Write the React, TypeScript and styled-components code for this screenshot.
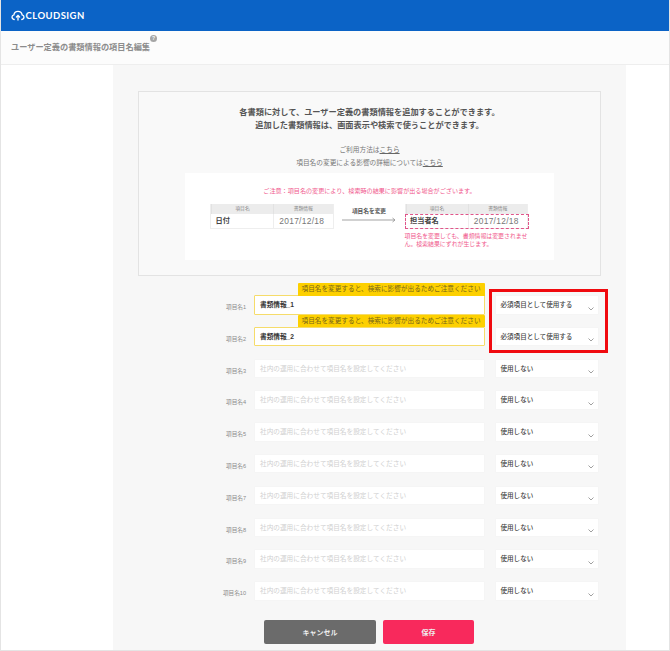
import React from "react";
import styled, { createGlobalStyle } from "styled-components";

const Global = createGlobalStyle`
  html, body { margin: 0; padding: 0; background: #fff; }
  body { font-family: "Liberation Sans", "Noto Sans CJK JP", sans-serif; color: #555; }
  * { box-sizing: border-box; }
`;

const Page = styled.div`
  width: 670px; height: 651px; overflow: hidden; display: flex; flex-direction: column;
  border-left: 1px solid #e4e4e4; border-right: 1px solid #e4e4e4; border-bottom: 1px solid #e4e4e4;
`;
const Header = styled.header`
  height: 31px; background: #0b63c6; display: flex; align-items: center; padding-left: 9.5px; gap: 1px; flex: none;
`;
const Brand = styled.span`
  font-family: "Lato", sans-serif; font-weight: 700; font-size: 9.5px; letter-spacing: .45px; color: #fff;
`;
const TitleBar = styled.div`
  height: 34px; flex: none; background: #fcfcfc; border-bottom: 1px solid #eee; padding: 10px 0 0 10px; display: flex;
`;
const Title = styled.h1`
  margin: 0; font-size: 8.2px; line-height: 13px; font-weight: 700; color: #8c8c8c;
`;
const Help = styled.span`
  width: 7px; height: 7px; border-radius: 50%; background: #a5a5a5; color: #fff; font-size: 5px; line-height: 7px;
  text-align: center; margin: -6px 0 0 0; font-weight: 700;
`;
const Body = styled.div`
  flex: 1; display: flex; padding-left: 112px;
`;
const Main = styled.main`
  width: 513px; background: #f7f7f7; padding: 26px 25px 0; position: relative;
`;
const InfoBox = styled.section`
  width: 463px; height: 185px; border: 1.5px solid #e3e3e3; background: #f9f9f9; padding: 15px 15px 0; text-align: center;
  display: flex; flex-direction: column; align-items: center;
`;
const Lead = styled.p`
  margin: 0; font-size: 8.2px; line-height: 12.5px; font-weight: 700; color: #555;
`;
const Note = styled.p<{ $top: number }>`
  margin: ${p => p.$top}px 0 0; font-size: 6.7px; line-height: 13px; color: #777;
`;
const Link = styled.a`
  color: #666; text-decoration: underline;
`;
const Sample = styled.div`
  margin-top: 4px; width: 369px; height: 87px; background: #fff; padding: 13px 25px 0; display: flex; flex-direction: column; align-self: center;
`;
const Caution = styled.p`
  margin: 0; font-size: 6.1px; line-height: 9px; color: #f0588c; text-align: center; white-space: nowrap;
`;
const Compare = styled.div`
  display: flex; align-items: flex-start; margin-top: 9px; gap: 8.5px;
`;
const Table = styled.div`
  width: 123.5px; flex: none; display: grid; grid-template-columns: 62px 1fr; grid-template-rows: 10px 14px; border: 1px solid #eee; border-top: none; position: relative;
`;
const HeadCell = styled.div`
  background: #ececec; font-size: 4.8px; line-height: 10px; color: #888; text-align: center; border-left: 1px solid #e2e2e2;
`;
const NameCell = styled.div`
  font-size: 7.2px; line-height: 14px; font-weight: 700; color: #444; text-align: left; padding-left: 4.5px;
`;
const ValueCell = styled.div`
  font-size: 8.4px; line-height: 14px; color: #777; text-align: center; border-left: 1px solid #eee; letter-spacing: .3px; padding-right: 3px;
`;
const Dashed = styled.div`
  position: absolute; left: -1px; right: -2px; top: 9.5px; height: 15.5px; border: 1.5px dashed #e0558a;
`;
const Arrow = styled.div`
  width: 54px; flex: none; padding-top: 3px; text-align: center; font-size: 5.7px; line-height: 8px; font-weight: 700; color: #555;
`;
const ArrowLine = styled.svg`
  display: block; margin-top: 1px;
`;
const Right = styled.div`
  display: flex; flex-direction: column; width: 130px; flex: none;
`;
const Warn = styled.p`
  margin: 2.5px 0 0; font-size: 5.9px; line-height: 8.5px; color: #f0588c; text-align: left;
`;
const Rows = styled.div`
  margin-top: 7px; display: flex; flex-direction: column; position: relative;
`;
const Row = styled.div`
  height: 31.8px; display: grid; grid-template-columns: 116px 230.5px 115px; padding-top: 12px;
`;
const RowLabel = styled.label`
  font-size: 5.6px; line-height: 8px; color: #8a8a8a; text-align: right; padding: 8px 8px 0 0; white-space: nowrap;
`;
const Field = styled.div<{ $on?: boolean }>`
  height: 19.5px; position: relative; background: #fff; border-radius: 1px; font-size: 6.67px; line-height: 18px; padding: 0 5px;
  border: ${p => (p.$on ? "1px solid #f6dc6a" : "1px solid #f5f5f5")};
  color: ${p => (p.$on ? "#333" : "#d0d0d0")}; font-weight: ${p => (p.$on ? 700 : 400)};
`;
const Tag = styled.div`
  position: absolute; right: -1px; top: -13px; height: 12.5px; width: 187px; background: #fdd000; border-radius: 1px 1px 0 0;
  color: #77651a; font-size: 6.65px; line-height: 12px; font-weight: 400; padding-left: 4px; white-space: nowrap;
`;
const Select = styled.div`
  margin-left: 10px; height: 19.5px; width: 104px; background: #fff; border: 1px solid #f5f5f5; border-radius: 1px; padding-left: 5px;
  font-size: 6.55px; line-height: 18px; color: #444; position: relative; font-weight: 500;
`;
const Chevron = styled.svg`
  position: absolute; right: 4px; top: 10.5px;
`;
const RedBox = styled.div`
  position: absolute; left: 351px; top: 6px; width: 119px; height: 64px; border: 3px solid #f00a0f; pointer-events: none;
`;
const Buttons = styled.div`
  display: flex; gap: 7px; margin: 19px 0 0 126px;
`;
const Button = styled.button<{ $primary?: boolean }>`
  height: 24px; width: ${p => (p.$primary ? "91px" : "112px")}; border: none; border-radius: 2px; color: #eee;
  background: ${p => (p.$primary ? "#f8295c" : "#6b6b6b")}; font: 700 7px "Liberation Sans", "Noto Sans CJK JP", sans-serif; padding: 0;
`;

const Logo = () => (
  <svg width="14" height="11" viewBox="0 0 14 11" fill="none" stroke="#fff" strokeWidth="1.3" strokeLinecap="round">
    <path d="M3.2 9.5C1.8 9.3 1 8.3 1 7.1c0-1.2.8-2 1.9-2.2C3.2 2.8 4.9 1.3 7 1.3s3.8 1.5 4.1 3.6c1.1.2 1.9 1 1.9 2.2 0 1.2-.8 2.2-2.2 2.4" />
    <path d="M7 10V5.5M5.4 7 7 5.4 8.6 7" />
  </svg>
);

const names = Array.from({ length: 10 }, (_, i) => i + 1);

export default function App() {
  return (
    <Page>
      <Global />
      <Header>
        <Logo />
        <Brand>CLOUDSIGN</Brand>
      </Header>
      <TitleBar>
        <Title>ユーザー定義の書類情報の項目名編集</Title>
        <Help>?</Help>
      </TitleBar>
      <Body>
        <Main>
          <InfoBox>
            <Lead>各書類に対して、ユーザー定義の書類情報を追加することができます。</Lead>
            <Lead>追加した書類情報は、画面表示や検索で使うことができます。</Lead>
            <Note $top={11}>ご利用方法は<Link>こちら</Link></Note>
            <Note $top={0}>項目名の変更による影響の詳細については<Link>こちら</Link></Note>
            <Sample>
              <Caution>ご注意：項目名の変更により、検索時の結果に影響が出る場合がございます。</Caution>
              <Compare>
                <Table>
                  <HeadCell>項目名</HeadCell>
                  <HeadCell>書類情報</HeadCell>
                  <NameCell>日付</NameCell>
                  <ValueCell>2017/12/18</ValueCell>
                </Table>
                <Arrow>
                  項目名を変更
                  <ArrowLine width="54" height="8" viewBox="0 0 54 8">
                    <path d="M0 4H53M50.5 2 53 4 50.5 6" stroke="#999" strokeWidth=".9" fill="none" />
                  </ArrowLine>
                </Arrow>
                <Right>
                  <Table>
                    <HeadCell>項目名</HeadCell>
                    <HeadCell>書類情報</HeadCell>
                    <NameCell>担当者名</NameCell>
                    <ValueCell>2017/12/18</ValueCell>
                    <Dashed />
                  </Table>
                  <Warn>項目名を変更しても、書類情報は変更されません。検索結果にずれが生じます。</Warn>
                </Right>
              </Compare>
            </Sample>
          </InfoBox>
          <Rows>
            {names.map(n => {
              const on = n <= 2;
              return (
                <Row key={n}>
                  <RowLabel>項目名{n}</RowLabel>
                  <Field $on={on}>
                    {on ? `書類情報_${n}` : "社内の運用に合わせて項目名を設定してください"}
                    {on && <Tag>項目名を変更すると、検索に影響が出るためご注意ください</Tag>}
                  </Field>
                  <Select>
                    {on ? "必須項目として使用する" : "使用しない"}
                    <Chevron width="6" height="4" viewBox="0 0 6 4" fill="none" stroke="#888" strokeWidth=".8">
                      <path d="M.5.5 3 3 5.5.5" />
                    </Chevron>
                  </Select>
                </Row>
              );
            })}
            <RedBox />
          </Rows>
          <Buttons>
            <Button>キャンセル</Button>
            <Button $primary>保存</Button>
          </Buttons>
        </Main>
      </Body>
    </Page>
  );
}
